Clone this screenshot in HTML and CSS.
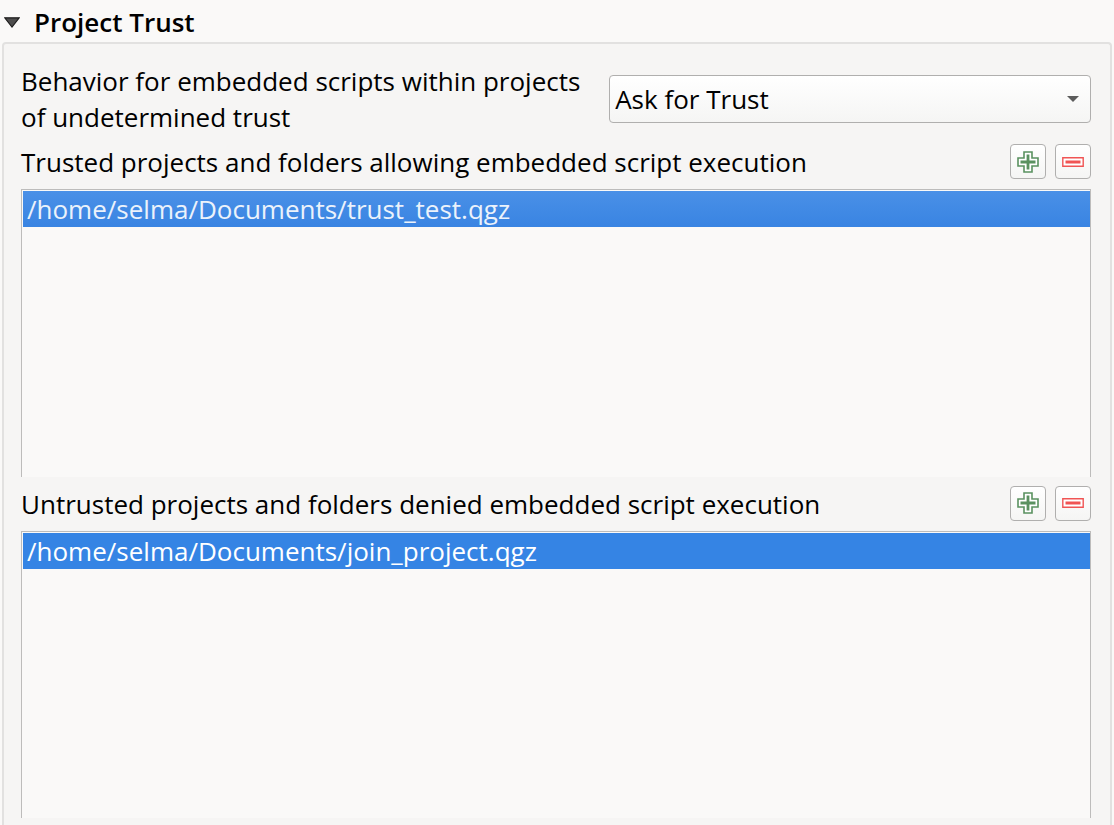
FILE: index.html
```html
<!DOCTYPE html>
<html lang="en">
<head>
  <meta charset="UTF-8" />
  <meta name="viewport" content="width=device-width, initial-scale=1.0"/>
  <title>Project Trust</title>
  <link rel="stylesheet" href="styles.css">
</head>
<body>

  <!-- icons shared by both lists -->
  <svg class="sprite" aria-hidden="true">
    <symbol id="icon-add" viewBox="0 0 22 22">
      <path d="M7 1h8v6h6v8h-6v6H7v-6H1V7h6z" fill="#fff" stroke="#5a9160" stroke-width="1.6"/>
      <path d="M11 3.5v15M3.5 11h15" stroke="#5a9160" stroke-width="2.8"/>
    </symbol>
    <symbol id="icon-remove" viewBox="0 0 22 22">
      <path d="M.8 6.8h20.4v8.4H.8z" fill="#fff" stroke="#f05454" stroke-width="1.4"/>
      <path d="M3.5 11h15" stroke="#f05454" stroke-width="3"/>
    </symbol>
  </svg>

  <h1 class="group-title">
    <button type="button" class="collapse" aria-expanded="true" aria-controls="trust">
      <svg class="arrow" viewBox="0 0 16 11" aria-hidden="true">
        <path d="M.8.8h14.4L8 10z" fill="#4d4d4d" stroke="#1c1c1c" stroke-width="1.2"/>
      </svg>
      Project Trust
    </button>
  </h1>

  <main class="group" id="trust">
    <div class="behavior">
      <label for="behavior">Behavior for embedded scripts within projects of undetermined trust</label>
      <div class="combo">
        <select id="behavior">
          <option>Ask for Trust</option>
        </select>
        <svg class="combo-arrow" viewBox="0 0 12 6" aria-hidden="true"><path d="M0 0h12L6 6z" fill="#5c5c5c"/></svg>
      </div>
    </div>

    <section class="projects">
      <div class="list-header">
        <h2 id="trusted">Trusted projects and folders allowing embedded script execution</h2>
        <button type="button" class="tool" aria-label="Add trusted project"><svg><use href="#icon-add"/></svg></button>
        <button type="button" class="tool" aria-label="Remove trusted project"><svg><use href="#icon-remove"/></svg></button>
      </div>
      <ul class="list" role="listbox" aria-labelledby="trusted">
        <li class="fading" role="option" aria-selected="true">/home/selma/Documents/trust_test.qgz</li>
      </ul>
    </section>

    <section class="projects">
      <div class="list-header">
        <h2 id="untrusted">Untrusted projects and folders denied embedded script execution</h2>
        <button type="button" class="tool" aria-label="Add untrusted project"><svg><use href="#icon-add"/></svg></button>
        <button type="button" class="tool" aria-label="Remove untrusted project"><svg><use href="#icon-remove"/></svg></button>
      </div>
      <ul class="list" role="listbox" aria-labelledby="untrusted">
        <li role="option" aria-selected="true">/home/selma/Documents/join_project.qgz</li>
      </ul>
    </section>
  </main>

</body>
</html>
```
FILE: styles.css
```css
* {
  box-sizing: border-box;
}

html, body {
  margin: 0;
  height: 100%;
}

body {
  display: flex;
  flex-direction: column;
  padding: 0 2px;
  background: #faf9f8;
  color: #000;
  font-family: "Open Sans", "Noto Sans", sans-serif;
  font-size: 26px;
  line-height: 36px;
}

button, select {
  font: inherit;
  color: inherit;
}

.sprite {
  display: none;
}

.group-title {
  margin: 0;
  padding: 4px 0 2px 2px;
  font-size: 26px;
  font-weight: 600;
}

.collapse {
  display: flex;
  align-items: center;
  gap: 14px;
  padding: 0;
  border: 0;
  background: none;
}

.arrow {
  width: 16px;
  height: 11px;
}

.group {
  flex: 1;
  display: flex;
  flex-direction: column;
  gap: 9px;
  padding: 19px 19px 7px 17px;
  border: 2px solid #e2e1e0;
  border-bottom: 0;
  border-radius: 4px 4px 0 0;
  background: #f6f5f4;
}

.behavior {
  display: grid;
  grid-template-columns: 6fr 5fr;
  align-items: center;
  gap: 10px;
}

.combo {
  position: relative;
}

.combo select {
  display: block;
  width: 100%;
  height: 48px;
  padding: 0 32px 0 5px;
  border: 1px solid #b0afae;
  border-radius: 4px;
  background: linear-gradient(#fff, #f5f5f4);
  appearance: none;
}

.combo-arrow {
  position: absolute;
  top: 21px;
  right: 12px;
  width: 12px;
  height: 6px;
  pointer-events: none;
}

.projects {
  flex: 1;
  display: flex;
  flex-direction: column;
  gap: 9px;
}

.list-header {
  display: flex;
  align-items: flex-start;
  gap: 9px;
}

.list-header h2 {
  flex: 1;
  margin: 0;
  font-size: 26px;
  font-weight: 400;
}

.tool {
  display: flex;
  align-items: center;
  justify-content: center;
  width: 36px;
  height: 35px;
  padding: 0;
  border: 1px solid #b0afae;
  border-radius: 4px;
  background: linear-gradient(#fff, #f5f5f4);
}

.tool svg {
  width: 22px;
  height: 22px;
}

.list {
  flex: 1;
  margin: 0;
  padding: 1px 0 0 1px;
  border: 1px solid #bdbcbb;
  border-bottom: 0;
  background: #faf9f8;
  list-style: none;
}

.list li {
  padding: 0 4px;
  background: #3584e4;
  color: #fff;
}

.list .fading {
  background: linear-gradient(#4a90e7, #3984e2);
  color: #ebf2fb;
}
```
